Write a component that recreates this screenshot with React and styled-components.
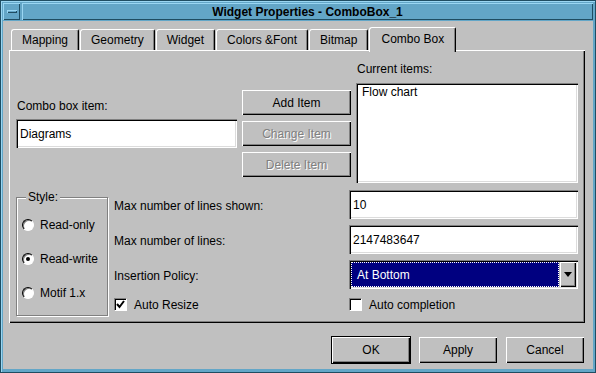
import React from 'react';
import styled, { createGlobalStyle, css } from 'styled-components';

const GRAY = '#c0c0c0';

const Global = createGlobalStyle`
  html, body { margin: 0; padding: 0; background: ${GRAY}; }
  body { font-family: "Liberation Sans", Arial, sans-serif; font-size: 12px; color: #000; }
  * { box-sizing: border-box; }
`;

const raised = css`
  box-shadow: inset 1px 1px #fff, inset -1px -1px #000, inset -2px -2px #808080;
`;
const sunken = css`
  box-shadow: inset 1px 1px #808080, inset 2px 2px #000, inset -1px -1px #fff, inset -2px -2px #dcdcdc;
`;
const frameBevel = css`
  box-shadow: inset 1px 1px #9ad6f2, inset -1px -1px #1f4d62;
`;

const Window = styled.div`
  width: 596px;
  height: 373px;
  display: flex;
  flex-direction: column;
  background: #63a6c7;
  border: 1px solid #1f4d62;
  padding: 2px 2px 3px 2px;
  box-shadow: inset 1px 1px #9ad6f2;
`;

const TitleRow = styled.div`
  display: flex;
  gap: 2px;
  height: 17px;
  margin-bottom: 1px;
`;

const MenuButton = styled.div`
  width: 17px;
  display: flex;
  align-items: center;
  justify-content: center;
  ${frameBevel};
`;

const MenuBar = styled.div`
  width: 10px;
  height: 3px;
  ${frameBevel};
`;

const TitleBar = styled.div`
  flex: 1;
  display: flex;
  align-items: center;
  justify-content: center;
  font-weight: bold;
  font-size: 12px;
  color: #000;
  ${frameBevel};
`;

const Client = styled.div`
  flex: 1;
  background: ${GRAY};
  display: flex;
  flex-direction: column;
  padding: 6px 8px 0 6px;
`;

const TabBar = styled.div`
  display: flex;
  align-items: flex-end;
  gap: 1px;
  height: 23px;
  padding-left: 2px;
`;

const Tab = styled.div`
  position: relative;
  z-index: ${(p) => (p.$active ? 1 : 0)};
  height: ${(p) => (p.$active ? 25 : 21)}px;
  margin-bottom: ${(p) => (p.$active ? -2 : 0)}px;
  padding: 0 ${(p) => (p.$active ? 11 : 10)}px ${(p) => (p.$active ? 2 : 0)}px;
  display: flex;
  align-items: center;
  background: ${GRAY};
  border-top: 1px solid #fff;
  border-left: 1px solid #fff;
  border-right: 1px solid #000;
  border-top-left-radius: 3px;
  border-top-right-radius: 2px;
  box-shadow: inset -1px 0 #808080;
  white-space: pre;
`;

const Panel = styled.div`
  height: 273px;
  background: ${GRAY};
  ${raised};
  padding: 12px 7px 0 7px;
  display: flex;
  flex-direction: column;
`;

const TopSection = styled.div`
  display: flex;
  gap: 5px;
`;

const Column = styled.div`
  width: ${(p) => p.$w}px;
  padding-top: ${(p) => p.$top || 0}px;
  display: flex;
  flex-direction: column;
  gap: ${(p) => p.$gap}px;
`;

const Label = styled.div`
  height: 14px;
  line-height: 14px;
  padding-left: 1px;
  white-space: nowrap;
`;

const TextField = styled.div`
  height: 29px;
  background: #fff;
  ${sunken};
  padding: 0 4px;
  display: flex;
  align-items: center;
`;

const ListBox = styled.div`
  height: 100px;
  background: #fff;
  ${sunken};
  padding: 2px 6px;
  line-height: 14px;
`;

const PushButton = styled.div`
  height: ${(p) => p.$h || 25}px;
  width: ${(p) => (p.$w ? `${p.$w}px` : 'auto')};
  background: ${GRAY};
  ${raised};
  display: flex;
  align-items: center;
  justify-content: center;
  color: ${(p) => (p.$disabled ? '#808080' : '#000')};
  text-shadow: ${(p) => (p.$disabled ? '1px 1px #fff' : 'none')};
  outline: ${(p) => (p.$default ? '1px solid #000' : 'none')};
`;

const BottomSection = styled.div`
  display: flex;
  gap: 6px;
  margin-top: 7px;
`;

const GroupBox = styled.fieldset`
  width: 92px;
  height: 126px;
  margin: 0;
  padding: 0 0 0 5px;
  border: 1px solid #808080;
  box-shadow: inset 1px 1px #fff, 1px 1px #fff;
`;

const Legend = styled.legend`
  margin-left: 4px;
  padding: 0 2px;
  line-height: 14px;
  background: ${GRAY};
`;

const RadioList = styled.div`
  display: flex;
  flex-direction: column;
  gap: 20px;
  padding-top: 14px;
`;

const RadioItem = styled.div`
  display: flex;
  align-items: center;
  gap: 6px;
  height: 14px;
  line-height: 14px;
  white-space: nowrap;
`;

const RadioCircle = styled.div`
  width: 12px;
  height: 12px;
  border-radius: 50%;
  background: #fff;
  border: 1px solid;
  border-color: #000 #fff #fff #000;
  box-shadow: inset 1px 1px #808080;
  display: flex;
  align-items: center;
  justify-content: center;
  &::after {
    content: '';
    width: 4px;
    height: 4px;
    border-radius: 50%;
    background: #000;
    display: ${(p) => (p.$on ? 'block' : 'none')};
  }
`;

const Form = styled.div`
  flex: 1;
  display: grid;
  grid-template-columns: 1fr 229px;
  grid-template-rows: 29px 29px 29px 13px;
  row-gap: 6px;
`;

const FormLabel = styled.div`
  align-self: center;
  padding-top: 3px;
  line-height: 14px;
  white-space: nowrap;
`;

const CheckRow = styled.div`
  margin-top: 3px;
  display: flex;
  align-items: center;
  gap: 7px;
  height: 13px;
  line-height: 14px;
  white-space: nowrap;
`;

const CheckBox = styled.div`
  width: 13px;
  height: 13px;
  background: #fff;
  border: 1px solid;
  border-color: #808080 #fff #fff #808080;
  box-shadow: inset 1px 1px #000;
  display: flex;
  align-items: center;
  justify-content: center;
`;

const Combo = styled.div`
  height: 29px;
  ${sunken};
  background: ${GRAY};
  padding: 2px;
  display: flex;
  gap: 1px;
`;

const ComboValue = styled.div`
  flex: 1;
  background: #000080;
  color: #fff;
  outline: 1px dotted #fff;
  outline-offset: -1px;
  padding-left: 6px;
  display: flex;
  align-items: center;
`;

const ArrowButton = styled.div`
  width: 16px;
  background: ${GRAY};
  ${raised};
  display: flex;
  align-items: center;
  justify-content: center;
`;

const ButtonRow = styled.div`
  display: flex;
  justify-content: flex-end;
  gap: 9px;
  margin-top: 14px;
  padding-right: 1px;
`;

const tabs = ['Mapping', 'Geometry', 'Widget', 'Colors &Font', 'Bitmap', 'Combo Box'];

export default function App() {
  return (
    <>
      <Global />
      <Window>
        <TitleRow>
          <MenuButton>
            <MenuBar />
          </MenuButton>
          <TitleBar>Widget Properties - ComboBox_1</TitleBar>
        </TitleRow>
        <Client>
          <TabBar>
            {tabs.map((t) => (
              <Tab key={t} $active={t === 'Combo Box'}>
                {t}
              </Tab>
            ))}
          </TabBar>
          <Panel>
            <TopSection>
              <Column $w={221} $top={37} $gap={6}>
                <Label>Combo box item:</Label>
                <TextField>Diagrams</TextField>
              </Column>
              <Column $w={109} $top={28} $gap={6}>
                <PushButton>Add Item</PushButton>
                <PushButton $disabled>Change Item</PushButton>
                <PushButton $disabled>Delete Item</PushButton>
              </Column>
              <Column $w={222} $gap={7}>
                <Label>Current items:</Label>
                <ListBox>Flow chart</ListBox>
              </Column>
            </TopSection>
            <BottomSection>
              <GroupBox>
                <Legend>Style:</Legend>
                <RadioList>
                  <RadioItem>
                    <RadioCircle />
                    Read-only
                  </RadioItem>
                  <RadioItem>
                    <RadioCircle $on />
                    Read-write
                  </RadioItem>
                  <RadioItem>
                    <RadioCircle />
                    Motif 1.x
                  </RadioItem>
                </RadioList>
              </GroupBox>
              <Form>
                <FormLabel>Max number of lines shown:</FormLabel>
                <TextField>10</TextField>
                <FormLabel>Max number of lines:</FormLabel>
                <TextField>2147483647</TextField>
                <FormLabel>Insertion Policy:</FormLabel>
                <Combo>
                  <ComboValue>At Bottom</ComboValue>
                  <ArrowButton>
                    <svg width="8" height="5" viewBox="0 0 8 5">
                      <polygon points="0,0 8,0 4,5" fill="#000" />
                    </svg>
                  </ArrowButton>
                </Combo>
                <CheckRow>
                  <CheckBox>
                    <svg width="11" height="11" viewBox="0 0 11 11">
                      <polyline points="2,5 4.5,8 9,2" fill="none" stroke="#000" strokeWidth="2" />
                    </svg>
                  </CheckBox>
                  Auto Resize
                </CheckRow>
                <CheckRow>
                  <CheckBox />
                  Auto completion
                </CheckRow>
              </Form>
            </BottomSection>
          </Panel>
          <ButtonRow>
            <PushButton $w={78} $h={26} $default>OK</PushButton>
            <PushButton $w={78} $h={26}>Apply</PushButton>
            <PushButton $w={78} $h={26}>Cancel</PushButton>
          </ButtonRow>
        </Client>
      </Window>
    </>
  );
}
